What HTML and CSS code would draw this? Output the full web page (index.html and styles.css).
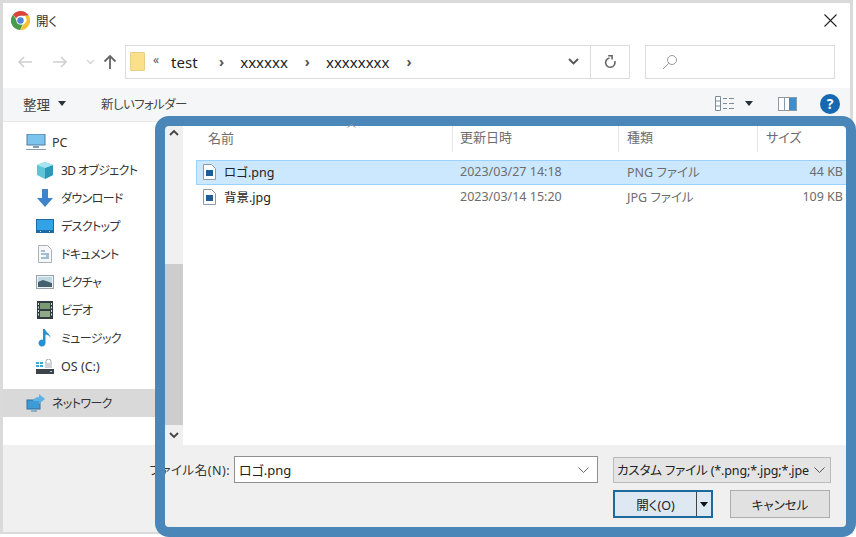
FILE: index.html
```html
<!DOCTYPE html>
<html lang="ja">
<head>
    <meta charset="UTF-8">
    <title>開く</title>
    <link rel="stylesheet" href="styles.css">
</head>
<body>
    <div class="window">
        <div class="titlebar">
            <svg class="chrome" viewBox="0 0 20 20" width="19" height="19">
                <path d="M10 0a10 10 0 0 1 8.700 5H10a5 5 0 0 0-4.600 3L2.200 3.600A10 10 0 0 1 10 0z" fill="#d8443a"/>
                <path d="M18.700 5A10 10 0 0 1 9.500 20l4-6.400a5 5 0 0 0 .8-8.600z" fill="#f2c230"/>
                <path d="M9.500 20A10 10 0 0 1 2.200 3.600L6 10a5 5 0 0 0 6.500 4z" fill="#4a9a4c"/>
                <circle cx="10" cy="10" r="4.300" fill="#fff"/>
                <circle cx="10" cy="10" r="3.400" fill="#4d84d8"/>
            </svg>
            <span class="title">開く</span>
            <svg class="close" viewBox="0 0 13 13" width="13" height="13"><path d="M.5.500l12 12M12.500.5l-12 12" stroke="#222" stroke-width="1.100" fill="none"/></svg>
        </div>

        <div class="navbar">
            <svg class="nav-icon" viewBox="0 0 16 14" width="16" height="14"><path d="M15 7H2M7 2L2 7l5 5" stroke="#d0d0d0" stroke-width="1.600" fill="none"/></svg>
            <svg class="nav-icon" viewBox="0 0 16 14" width="16" height="14"><path d="M1 7h13M9 2l5 5-5 5" stroke="#d0d0d0" stroke-width="1.600" fill="none"/></svg>
            <svg class="nav-icon small" viewBox="0 0 9 6" width="9" height="6"><path d="M1 1l3.500 3.500L8 1" stroke="#d4d4d4" stroke-width="1.300" fill="none"/></svg>
            <svg class="nav-icon up" viewBox="0 0 14 16" width="14" height="16"><path d="M7 15V2M1.500 7.500L7 2l5.500 5.500" stroke="#666" stroke-width="1.800" fill="none"/></svg>

            <div class="address">
                <span class="folder"></span>
                <span class="crumb-more">«</span>
                <span class="crumb first">test</span>
                <span class="sep">›</span>
                <span class="crumb">xxxxxx</span>
                <span class="sep">›</span>
                <span class="crumb">xxxxxxxx</span>
                <span class="sep">›</span>
                <span class="address-end">
                    <svg viewBox="0 0 11 7" width="11" height="7"><path d="M1 1l4.500 4.500L10 1" stroke="#555" stroke-width="1.800" fill="none"/></svg>
                </span>
                <span class="refresh">
                    <svg viewBox="0 0 14 15" width="13" height="14"><path d="M11.500 6.500A5 5 0 1 1 6 3.200M4.500 .8h4.200v4" stroke="#666" stroke-width="1.700" fill="none"/></svg>
                </span>
            </div>

            <div class="search">
                <svg viewBox="0 0 16 16" width="16" height="16"><circle cx="10" cy="6" r="4.500" stroke="#999" fill="none"/><path d="M6.800 9.300L1 15" stroke="#999" fill="none"/></svg>
            </div>
        </div>

        <div class="toolbar">
            <span class="organize">整理</span>
            <span class="caret"></span>
            <span class="new-folder">新しいフォルダー</span>
            <svg class="view-icon" viewBox="0 0 20 15" width="20" height="15">
                <path d="M.5.500h5v14h-5zM.5 5h5M.5 10h5" stroke="#7d8b96" fill="#fff"/>
                <path d="M8 2.500h4M14 2.500h5M8 7.500h4M14 7.500h5M8 12.500h4M14 12.500h5" stroke="#7d8b96"/>
            </svg>
            <span class="caret view-caret"></span>
            <svg class="pane-icon" viewBox="0 0 19 14" width="19" height="14">
                <rect x=".5" y=".5" width="18" height="13" fill="#fff" stroke="#8a9aa6"/>
                <rect x="11" y="1" width="7" height="12" fill="#3f8ecb"/>
                <path d="M6.500 1v12" stroke="#8a9aa6"/>
            </svg>
            <span class="help">?</span>
        </div>

        <div class="main">
            <div class="sidebar">
                <div class="nav-item root">
                    <svg viewBox="0 0 20 16" width="20" height="16"><rect x="1" y="0" width="18" height="11" fill="#7cc3ee" stroke="#4f7f9f"/><path d="M7 13h6" stroke="#7d9fb5" stroke-width="2"/><path d="M0 15.500h20" stroke="#8e9ca6"/></svg>
                    <span class="latin">PC</span>
                </div>
                <div class="nav-item">
                    <svg viewBox="0 0 18 17" width="18" height="17"><path d="M9 0l8 3v10l-8 4-8-4V3z" fill="#5fc4d8"/><path d="M9 6l8-3v10l-8 4z" fill="#2d97b8"/><path d="M9 0l8 3-8 3-8-3z" fill="#a9e3ef"/></svg>
                    <span>3D オブジェクト</span>
                </div>
                <div class="nav-item">
                    <svg viewBox="0 0 18 18" width="18" height="18"><path d="M6 0h6v9h5l-8 9-8-9h5z" fill="#3f83c9"/></svg>
                    <span>ダウンロード</span>
                </div>
                <div class="nav-item">
                    <svg viewBox="0 0 18 14" width="18" height="14"><rect width="18" height="14" fill="#1d6aa8"/><rect x="1" y="1" width="16" height="10" fill="#34a3e6"/><path d="M4 12.500h1M13 12.500h1" stroke="#cfe6f5"/></svg>
                    <span>デスクトップ</span>
                </div>
                <div class="nav-item">
                    <svg viewBox="0 0 14 18" width="14" height="18"><path d="M.5.500h9l4 4v13H.5z" fill="#f7f7f7" stroke="#a9b2b9"/><path d="M3 6h4M3 9h8M8 11h3M3 13h8" stroke="#4a86b0"/></svg>
                    <span>ドキュメント</span>
                </div>
                <div class="nav-item">
                    <svg viewBox="0 0 18 14" width="18" height="14"><rect x=".5" y=".5" width="17" height="13" fill="#eef2f4" stroke="#98a4ab"/><rect x="2" y="2" width="14" height="5" fill="#bfd8e4"/><path d="M2 7l5-2 9 3v4H2z" fill="#44616f"/></svg>
                    <span>ピクチャ</span>
                </div>
                <div class="nav-item">
                    <svg viewBox="0 0 16 18" width="16" height="18"><rect width="16" height="18" fill="#2f3a42"/><rect x="3" y="2" width="10" height="6" fill="#7a9a74"/><rect x="3" y="10" width="10" height="6" fill="#90a88a"/><path d="M1.500 2v14M14.500 2v14" stroke="#d8dee2" stroke-dasharray="2 1.500"/></svg>
                    <span>ビデオ</span>
                </div>
                <div class="nav-item">
                    <svg viewBox="0 0 14 18" width="14" height="18"><path d="M5 0h2c.4 3 5 4.500 5.500 9-1-2-3-3.500-5-3.500V14a3.500 3.500 0 1 1-2.500-3.300z" fill="#2a8fd0"/></svg>
                    <span>ミュージック</span>
                </div>
                <div class="nav-item">
                    <svg viewBox="0 0 18 15" width="18" height="15"><path d="M0 3h3v2H0zM4 3h3v2H4zM0 6h3v2H0zM4 6h3v2H4z" fill="#3ba6d8"/><path d="M10 4V2.500a2.500 2.500 0 0 1 5 0V4" stroke="#9aa3a9" fill="none"/><rect x="9" y="4" width="7" height="5" fill="#d0d4d6"/><rect y="10" width="18" height="5" fill="#3c4449"/><path d="M14 12.500h2" stroke="#8fd0f0"/></svg>
                    <span class="latin">OS (C:)</span>
                </div>
                <div class="nav-item root network">
                    <svg viewBox="0 0 20 19" width="20" height="19"><rect x="1" y="6" width="13" height="9" fill="#3d9bd6" stroke="#2f6f9d"/><path d="M5 17h6" stroke="#8ab0c8" stroke-width="2"/><path d="M7 7c1-3 3-4 6-4V0l6 5-6 5V7c-2 0-4 0-6 0z" fill="#5fb2e6"/></svg>
                    <span>ネットワーク</span>
                </div>
            </div>

            <div class="scrollbar">
                <div class="scroll-btn">
                    <svg viewBox="0 0 10 7" width="10" height="7"><path d="M1 6l4-4 4 4" stroke="#444" stroke-width="1.800" fill="none"/></svg>
                </div>
                <div class="scroll-track"><div class="scroll-thumb"></div></div>
                <div class="scroll-btn">
                    <svg viewBox="0 0 10 7" width="10" height="7"><path d="M1 1l4 4 4-4" stroke="#444" stroke-width="1.800" fill="none"/></svg>
                </div>
            </div>

            <div class="files">
                <div class="file-head">
                    <span class="col-name">名前</span>
                    <span class="col-date">更新日時</span>
                    <span class="col-type">種類</span>
                    <span class="col-size">サイズ</span>
                </div>
                <div class="file-row selected">
                    <span class="col-name">
                        <svg viewBox="0 0 13 16" width="13" height="16"><path d="M.5.500h8l4 4v11H.5z" fill="#fff" stroke="#8d9aa3"/><rect x="3" y="6" width="7" height="6" fill="#1f5d93"/></svg>
                        <span class="file-name">ロゴ.png</span>
                    </span>
                    <span class="col-date">2023/03/27 14:18</span>
                    <span class="col-type">PNG ファイル</span>
                    <span class="col-size">44 KB</span>
                </div>
                <div class="file-row">
                    <span class="col-name">
                        <svg viewBox="0 0 13 16" width="13" height="16"><path d="M.5.500h8l4 4v11H.5z" fill="#fff" stroke="#8d9aa3"/><rect x="3" y="6" width="7" height="6" fill="#1f5d93"/></svg>
                        <span class="file-name">背景.jpg</span>
                    </span>
                    <span class="col-date">2023/03/14 15:20</span>
                    <span class="col-type">JPG ファイル</span>
                    <span class="col-size">109 KB</span>
                </div>
            </div>
        </div>

        <div class="footer">
            <div class="footer-row">
                <span class="field-label">ファイル名(N):</span>
                <div class="name-input">
                    <span>ロゴ.png</span>
                    <svg viewBox="0 0 11 6" width="11" height="6"><path d="M.5.500l5 5 5-5" stroke="#666" fill="none"/></svg>
                </div>
                <div class="type-select">
                    <span>カスタム ファイル (*.png;*.jpg;*.jpe</span>
                    <svg viewBox="0 0 11 6" width="11" height="6"><path d="M.5.500l5 5 5-5" stroke="#555" fill="none"/></svg>
                </div>
            </div>
            <div class="footer-row buttons">
                <div class="btn primary">
                    <span class="btn-label">開く(O)</span>
                    <span class="btn-split"><span class="caret dark"></span></span>
                </div>
                <div class="btn">キャンセル</div>
            </div>
        </div>
    </div>

    <!-- 青い枠 -->
    <div class="highlight"></div>
    <svg class="sort-mark" viewBox="0 0 9 4" width="9" height="4"><path d="M.5 3.500l4-3 4 3" stroke="#9a9a9a" fill="none"/></svg>
</body>
</html>
```

FILE: styles.css
```css
* {
    box-sizing: border-box;
}

body {
    margin: 0;
    width: 856px;
    height: 537px;
    position: relative;
    overflow: hidden;
    background-color: #fff;
    font-family: "Noto Sans", "Noto Sans CJK JP", sans-serif;
    font-feature-settings: "palt";
    font-size: 12.500px;
    color: #333;
}

.window {
    width: 853px;
    height: 534px;
    display: flex;
    flex-direction: column;
    border: 3px solid #dadada;
    border-bottom-width: 2px;
    background-color: #fff;
}

.titlebar {
    height: 32px;
    flex: none;
    display: flex;
    align-items: center;
    padding: 2px 13px 0 8px;
}

.title {
    margin-left: 6px;
    font-size: 12.500px;
}

.close {
    margin-left: auto;
}

.navbar {
    height: 53px;
    flex: none;
    display: flex;
    align-items: center;
}

.nav-icon {
    flex: none;
    margin-left: 14px;
    margin-right: 6px;
}

.nav-icon + .nav-icon {
    margin-left: 13px;
}

.nav-icon.small {
    margin-left: 12px;
    margin-right: 0;
}

.nav-icon.up {
    margin-left: 8px;
    margin-right: 0;
}

.address {
    width: 505px;
    height: 34px;
    margin-left: 8px;
    display: flex;
    align-items: center;
    border: 1px solid #dcdcdc;
    color: #222;
}

.folder {
    width: 15px;
    height: 19px;
    margin-left: 4px;
    background-color: #fbe08c;
    border: 1px solid #e8cf85;
    border-radius: 1px;
}

.crumb-more {
    margin-left: 8px;
    margin-top: -4px;
    color: #555;
    font-size: 12px;
}

.crumb {
    font-size: 15px;
}

.crumb.first {
    margin-left: 12px;
    width: 31px;
}

.sep {
    margin: 0 16px 0 17px;
    color: #555;
    font-size: 14px;
    font-weight: bold;
}

.address-end {
    margin-left: auto;
    padding-right: 11px;
    display: flex;
}

.refresh {
    width: 39px;
    height: 100%;
    display: flex;
    align-items: center;
    justify-content: center;
    border-left: 1px solid #dcdcdc;
}

.search {
    width: 190px;
    height: 34px;
    margin-left: 15px;
    padding-left: 16px;
    display: flex;
    align-items: center;
    border: 1px solid #dcdcdc;
}

.toolbar {
    height: 34px;
    flex: none;
    display: flex;
    align-items: center;
    padding: 0 0 2px 20px;
    background-color: #f4f6f8;
    border-bottom: 1px solid #e8e8e8;
    color: #444;
    font-size: 12.500px;
}

.organize {
    font-size: 13.500px;
}

.caret {
    width: 0;
    height: 0;
    margin-left: 8px;
    border-left: 4.500px solid transparent;
    border-right: 4.500px solid transparent;
    border-top: 5px solid #29323a;
}

.new-folder {
    margin-left: 35px;
    letter-spacing: -.6px;
}

.view-icon {
    margin-left: auto;
}

.view-caret {
    margin-left: 10px;
}

.pane-icon {
    margin-left: 25px;
}

.help {
    width: 20px;
    height: 20px;
    margin: 0 10px 0 23px;
    border-radius: 50%;
    background-color: #1668b0;
    color: #fff;
    font-size: 14px;
    font-weight: bold;
    line-height: 20px;
    text-align: center;
}

.main {
    flex: 1;
    min-height: 0;
    display: flex;
    background-color: #fff;
}

.sidebar {
    width: 162px;
    flex: none;
    padding-top: 6px;
    font-size: 12px;
    color: #333;
}

.nav-item {
    height: 28px;
    display: grid;
    grid-template-columns: 18px 1fr;
    align-items: center;
    justify-items: center;
    column-gap: 7px;
    padding-left: 33px;
}

.nav-item span {
    justify-self: start;
    letter-spacing: -.6px;
}

.nav-item span.latin {
    font-size: 12.500px;
    letter-spacing: 0;
}

.nav-item.root {
    grid-template-columns: 20px 1fr;
    column-gap: 6px;
    padding-left: 23px;
}

.nav-item.network {
    margin-top: 9px;
    background-color: #d9d9d9;
}

.scrollbar {
    width: 18px;
    flex: none;
    display: flex;
    flex-direction: column;
    background-color: #f0f0f0;
}

.scroll-btn {
    height: 20px;
    flex: none;
    display: flex;
    align-items: center;
    justify-content: center;
}

.scroll-track {
    flex: 1;
    padding-top: 122px;
}

.scroll-thumb {
    height: 161px;
    background-color: #cdcdcd;
}

.files {
    flex: 1;
    min-width: 0;
    color: #6d6d6d;
}

.file-head,
.file-row {
    display: flex;
    align-items: center;
}

.file-head {
    height: 38px;
    padding-bottom: 4px;
    font-size: 13px;
}

.file-row {
    height: 25px;
    margin-left: 13px;
    border: 1px solid transparent;
    padding-bottom: 2px;
    font-size: 12.500px;
}

.file-row.selected {
    background-color: #cce8ff;
    border-color: #99d1ff;
}

.col-name {
    width: 254px;
    padding-left: 6px;
    display: flex;
    align-items: center;
    flex: none;
}

.file-head .col-name {
    width: 269px;
    padding: 0 0 4px 25px;
}

.col-date {
    width: 167px;
    flex: none;
    padding-left: 8px;
    border-left: 1px solid transparent;
}

.col-type {
    width: 139px;
    flex: none;
    padding-left: 8px;
    border-left: 1px solid transparent;
}

.col-size {
    flex: 1;
}

.file-head .col-date,
.file-head .col-type,
.file-head .col-size {
    height: 26px;
    line-height: 22px;
    border-left: 1px solid #e6e6e6;
}

.file-head .col-date {
    width: 166px;
    padding-left: 7px;
}

.file-head .col-size {
    padding-left: 8px;
}

.file-row .col-size {
    padding-right: 6px;
    text-align: right;
}

.file-name {
    margin-left: 8px;
    color: #222;
    font-size: 12.500px;
}

.footer {
    height: 87px;
    flex: none;
    padding: 11px 19px 0 0;
    background-color: #f0f0f0;
}

.footer-row {
    display: flex;
    align-items: center;
    justify-content: flex-end;
}

.field-label {
    margin-right: 4px;
    font-size: 12.500px;
    letter-spacing: .5px;
}

.name-input {
    width: 364px;
    height: 27px;
    padding: 0 8px 0 4px;
    display: flex;
    align-items: center;
    justify-content: space-between;
    background-color: #fff;
    border: 1px solid #8f8f8f;
    color: #222;
    font-size: 13px;
}

.type-select {
    width: 218px;
    height: 26px;
    margin-left: 15px;
    padding: 0 5px 0 3px;
    display: flex;
    align-items: center;
    justify-content: space-between;
    background-color: #e4e4e4;
    border: 1px solid #bababa;
    color: #222;
    font-size: 12.500px;
    letter-spacing: -.15px;
    white-space: nowrap;
}

.buttons {
    margin: 7px 1px 0 0;
    gap: 17px;
}

.btn {
    width: 100px;
    height: 28px;
    display: flex;
    align-items: center;
    justify-content: center;
    background-color: #e1e1e1;
    border: 1px solid #adadad;
    color: #222;
    font-size: 12.500px;
}

.btn.primary {
    background-color: #dde8f2;
    border: 2px solid #1a6a9e;
    justify-content: flex-start;
}

.btn-label {
    flex: 1;
    text-align: center;
}

.btn-split {
    width: 15px;
    height: 100%;
    display: flex;
    align-items: center;
    justify-content: center;
    border-left: 1px solid #444;
}

.caret.dark {
    margin-left: 0;
    border-top-color: #111;
}

.highlight {
    position: absolute;
    left: 155px;
    top: 116px;
    width: 701px;
    height: 421px;
    border: 10px solid #4a86b8;
    border-radius: 14px;
    pointer-events: none;
}

.sort-mark {
    position: absolute;
    left: 347px;
    top: 124px;
}
```
